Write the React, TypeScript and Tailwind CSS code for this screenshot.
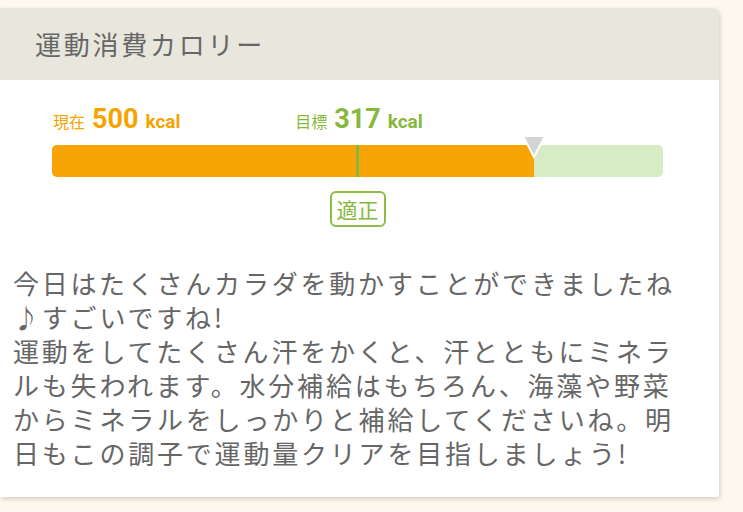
import React from "react";

const CJK = '"Noto Sans CJK JP", "Noto Sans", sans-serif';
const NUM = 'Roboto, "Noto Sans CJK JP", sans-serif';

export default function App() {
  const current = 500;
  const target = 317;
  const max = target * 2;
  const pct = Math.min(current / max, 1) * 100;

  return (
    <div className="w-[743px] h-[512px] bg-[#fdf9ef] pt-[8px] overflow-hidden" style={{ fontFamily: CJK }}>
      <div className="w-[719px] bg-white rounded-tr-[6px] rounded-br-[2px] shadow-[1px_2px_5px_rgba(0,0,0,0.18)] overflow-hidden">
        <div className="h-[72px] bg-[#e8e6dd] flex items-center pl-[35px]">
          <h1 className="text-[26px] tracking-[2.75px] text-[#666666] font-normal leading-none">運動消費カロリー</h1>
        </div>
        <div className="pl-[52px] pr-[56px] pt-[20px]">
          <div className="grid grid-cols-[1fr_auto_1fr] items-end h-[36px]">
            <div className="flex items-baseline text-[#f5a300]" style={{ fontFamily: NUM }}>
              <span className="text-[16px] mr-[7px] pl-[1px]" style={{ fontFamily: CJK }}>現在</span>
              <span className="text-[27px] font-bold mr-[7px] leading-none">500</span>
              <span className="text-[19px] font-bold">kcal</span>
            </div>
            <div className="flex items-baseline text-[#86b83e] ml-[3px]" style={{ fontFamily: NUM }}>
              <span className="text-[16px] mr-[7px]" style={{ fontFamily: CJK }}>目標</span>
              <span className="text-[27px] font-bold mr-[7px] leading-none">317</span>
              <span className="text-[19px] font-bold">kcal</span>
            </div>
            <div />
          </div>
          <div className="relative mt-[9px] h-[32px] rounded-[5px] bg-[#d7ebc5]">
            <div className="h-full rounded-l-[5px] bg-[#f7a404]" style={{ width: `${pct}%` }} />
            <div className="absolute top-0 bottom-0 left-1/2 w-[3px] -ml-[1.5px] bg-[#86b83e]" />
            <svg
              className="absolute top-[-10px]"
              style={{ left: `calc(${pct}% - 13px)` }}
              width="26"
              height="24"
              viewBox="0 0 26 24"
            >
              <polygon points="2,1 24,1 13,22" fill="#d4d4d4" stroke="#ffffff" strokeWidth="2" strokeLinejoin="miter" />
            </svg>
          </div>
          <div className="flex justify-center mt-[14px]">
            <div className="w-[56px] h-[36px] border-2 border-[#8cbd47] rounded-[6px] flex items-center justify-center text-[21px] text-[#86b83e] leading-none">
              適正
            </div>
          </div>
        </div>
        <p className="pl-[13px] pr-[20px] pt-[39px] pb-[27px] text-[26px] tracking-[2.8px] leading-[34px] text-[#666666] whitespace-nowrap">
          今日はたくさんカラダを動かすことができましたね
          <br />
          ♪すごいですね!
          <br />
          運動をしてたくさん汗をかくと、汗とともにミネラ
          <br />
          ルも失われます。水分補給はもちろん、海藻や野菜
          <br />
          からミネラルをしっかりと補給してくださいね。明
          <br />
          日もこの調子で運動量クリアを目指しましょう!
        </p>
      </div>
    </div>
  );
}
